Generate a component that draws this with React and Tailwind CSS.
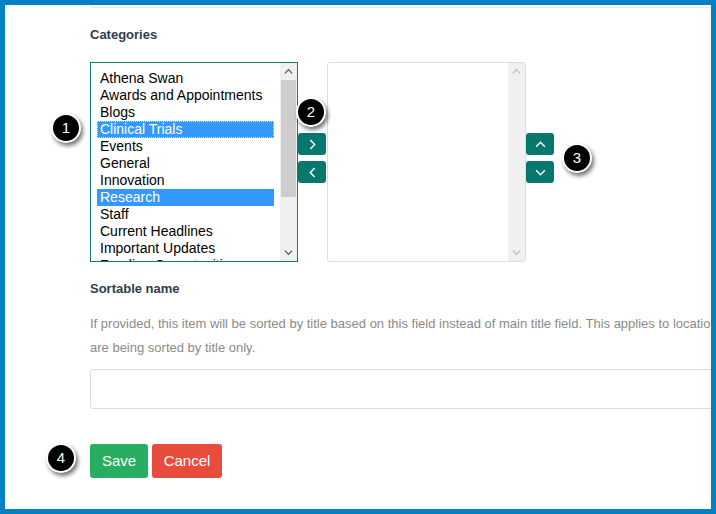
import React from "react";

const categories = [
  "Athena Swan",
  "Awards and Appointments",
  "Blogs",
  "Clinical Trials",
  "Events",
  "General",
  "Innovation",
  "Research",
  "Staff",
  "Current Headlines",
  "Important Updates",
  "Funding Opportunities",
];

const selected = ["Clinical Trials", "Research"];

const Chevron = ({ dir, className = "", size = 10 }) => {
  const pts = {
    right: "3,1 7,5 3,9",
    left: "7,1 3,5 7,9",
    up: "1,7 5,3 9,7",
    down: "1,3 5,7 9,3",
  };
  return (
    <svg width={size} height={size} viewBox="0 0 10 10" className={className}>
      <polyline points={pts[dir]} fill="none" stroke="currentColor" strokeWidth="1.3" />
    </svg>
  );
};

const Badge = ({ n, className }) => (
  <div
    className={`absolute flex h-[30px] w-[30px] items-center justify-center rounded-full border-2 border-white bg-black text-[15px] text-white shadow-[2px_3px_4px_rgba(0,0,0,0.55)] ${className}`}
  >
    {n}
  </div>
);

const TealButton = ({ dir }) => (
  <button className="flex h-[22px] w-[28px] items-center justify-center rounded-[3px] bg-[#087770] text-white">
    <Chevron dir={dir} size={11} />
  </button>
);

const ScrollBar = ({ disabled }) => (
  <div className="flex h-full w-[17px] flex-col bg-[#f0f0f0]">
    <div className={`flex h-[17px] items-center justify-center ${disabled ? "text-[#b8b8b8]" : "text-[#505050]"}`}>
      <Chevron dir="up" size={9} />
    </div>
    <div className="flex-1">
      {!disabled && <div className="mx-[1px] h-[117px] bg-[#cdcdcd]" />}
    </div>
    <div className={`flex h-[17px] items-center justify-center ${disabled ? "text-[#b8b8b8]" : "text-[#505050]"}`}>
      <Chevron dir="down" size={9} />
    </div>
  </div>
);

export default function App() {
  return (
    <div className="relative h-[514px] w-[716px] overflow-hidden border-[5px] border-[#0580c2] bg-white font-['Liberation_Sans',Arial,sans-serif]">
      <div className="pl-[85px]">
        <div className="h-[3px] w-[800px] rounded-b-[3px] border border-t-0 border-[#e8e8e8]" />

        <div className="mt-[19px] text-[13px] font-bold leading-[16px] text-[#2c3e50]">Categories</div>

        <div className="mt-[19px] flex items-start">
          <div className="flex h-[200px] w-[208px] overflow-hidden border border-[#117a73] bg-white">
            <ul className="flex-1 overflow-hidden pl-[6px] pr-[6px] pt-[7px] text-[14px] leading-[17px] text-black">
              {categories.map((c) => {
                const on = selected.includes(c);
                return (
                  <li
                    key={c}
                    className={`whitespace-nowrap px-[3px] ${on ? "bg-[#3399ff] text-white" : ""} ${
                      c === "Clinical Trials" ? "outline-1 -outline-offset-1 outline-dotted outline-[#c9e2ff]" : ""
                    }`}
                  >
                    {c}
                  </li>
                );
              })}
            </ul>
            <ScrollBar />
          </div>

          <div className="mt-[71px] flex flex-col gap-[6px]">
            <TealButton dir="right" />
            <TealButton dir="left" />
          </div>

          <div className="ml-[1px] flex h-[200px] w-[199px] overflow-hidden rounded-[3px] border border-[#dddddd] bg-white">
            <div className="flex-1" />
            <ScrollBar disabled />
          </div>

          <div className="mt-[71px] flex flex-col gap-[6px]">
            <TealButton dir="up" />
            <TealButton dir="down" />
          </div>
        </div>

        <div className="mt-[19px] text-[13px] font-bold leading-[16px] text-[#2c3e50]">Sortable name</div>

        <div className="mt-[15px] text-[13px] leading-[24px] text-[#8a8a8a]">
          <div className="whitespace-nowrap">
            If provided, this item will be sorted by title based on this field instead of main title field. This applies to locations that
          </div>
          <div className="whitespace-nowrap">are being sorted by title only.</div>
        </div>

        <div className="mt-[9px] h-[40px] w-[700px] rounded-[3px] border border-[#dddddd]" />

        <div className="mt-[35px] flex gap-[4px]">
          <button className="h-[34px] w-[58px] rounded-[3px] bg-[#27ae60] text-[15px] text-white">Save</button>
          <button className="h-[34px] w-[70px] rounded-[3px] bg-[#e74c3c] text-[15px] text-white">Cancel</button>
        </div>
      </div>

      <Badge n="1" className="left-[46px] top-[108px]" />
      <Badge n="2" className="left-[291px] top-[92px]" />
      <Badge n="3" className="left-[557px] top-[138px]" />
      <Badge n="4" className="left-[41px] top-[438px]" />
    </div>
  );
}
